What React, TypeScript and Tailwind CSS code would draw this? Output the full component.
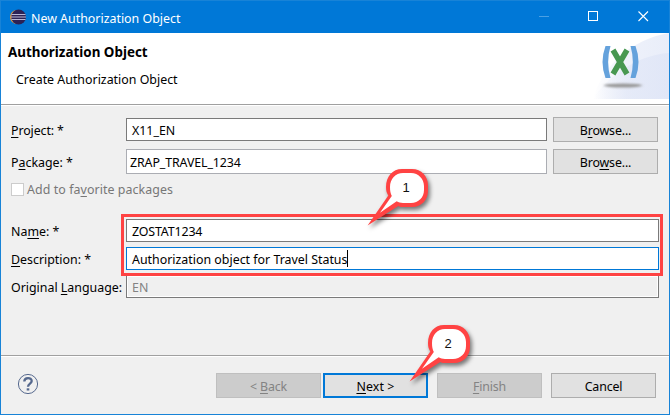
import type { ReactNode } from "react";

const U = ({ children }: { children: ReactNode }) => (
  <span className="underline decoration-1 underline-offset-2">{children}</span>
);

const T = ({ children, className = "" }: { children: ReactNode; className?: string }) => (
  <span className={`block whitespace-pre leading-[17px] ${className}`}>{children}</span>
);

const Label = ({ children, className = "" }: { children: ReactNode; className?: string }) => (
  <div className="w-[115px] shrink-0">
    <T className={`pt-[2px] ${className}`}>{children}</T>
  </div>
);

const Button = ({ children, className = "" }: { children: ReactNode; className?: string }) => (
  <button
    className={`flex h-[25px] w-[105px] shrink-0 items-center justify-center border pt-[2px] tracking-[-0.15px] ${className}`}
  >
    {children}
  </button>
);

function Callout({ n, className }: { n: number; className: string }) {
  return (
    <div className={`absolute h-[70px] w-[76px] ${className}`}>
      <svg width="76" height="70" viewBox="0 0 76 70" className="absolute overflow-visible">
        <path
          d="M35 2H45C54.5 2 61 9.5 61 18V24C61 33 54.5 40 45 40H35C33.5 40 32.5 39.6 31.3 38.9L0.6 58.4L21.3 28.5C19.6 26 19 23.5 19 20C19 9.5 25.5 2 35 2Z"
          fill="#ff4343"
          className="drop-shadow-[2px_3px_2px_rgba(0,0,0,0.5)]"
        />
        <path
          d="M36 6H44C51.5 6 57 12 57 19V23C57 30.500 51.5 36 44 36H36C33.500 36 31.500 35.400 29.7 34.3L13 45.7L24.8 29C23.500 26.500 23 24 23 20C23 12 28.5 6 36 6Z"
          fill="#fff"
        />
      </svg>
      <span className="absolute left-[19px] top-[13px] w-[40px] text-center font-['Liberation_Sans',sans-serif] text-[13px] leading-[16px] text-[#111]">
        {n}
      </span>
    </div>
  );
}

export default function App() {
  return (
    <div className="relative flex h-[415px] w-[670px] flex-col overflow-hidden border border-t-0 border-[#1883d7] bg-[#f0f0f0] font-['Noto_Sans','Open_Sans',sans-serif] text-[12.4px] text-black">
      <header className="flex h-[33px] shrink-0 items-center border-t border-[#1883d7] bg-[#0078d7] pl-[9px] text-white">
        <svg width="16" height="16" viewBox="0 0 16 16">
          <circle cx="7" cy="8" r="7" fill="#e89a3c" />
          <circle cx="8.6" cy="8" r="7.4" fill="#2c2255" />
          <path d="M1.5 5.5H15.5M1 8H16M1.5 10.5H15.5" stroke="#b9b7d6" strokeWidth="1.1" />
        </svg>
        <T className="ml-[5px] pt-[2px]">New Authorization Object</T>
        <svg width="110" height="12" viewBox="0 0 110 12" className="ml-auto mr-[20px]" fill="none">
          <path d="M0 5.5H10" stroke="#4aa0e4" />
          <rect x="49.5" y="0.5" width="9" height="9" stroke="#fff" />
          <path d="M99.5 0.5L109 10M109 0.5L99.5 10" stroke="#fff" strokeWidth="1.1" />
        </svg>
      </header>

      <section className="flex h-[71px] shrink-0 justify-between bg-white">
        <div className="flex flex-col pl-[7px] pt-[11px]">
          <T className="text-[13.4px]"><b>Authorization Object</b></T>
          <T className="ml-[8px] mt-[10px]">Create Authorization Object</T>
        </div>
        <svg width="78" height="66" viewBox="0 0 78 66">
          <defs>
            <linearGradient id="glow" x1="0" x2="1">
              <stop offset="0" stopColor="#dfe5f6" stopOpacity="0" />
              <stop offset="0.45" stopColor="#dfe5f6" stopOpacity="0.8" />
              <stop offset="1" stopColor="#dde4f6" />
            </linearGradient>
            <filter id="soft" x="-20%" y="-150%" width="140%" height="400%">
              <feGaussianBlur stdDeviation="1.8 0.9" />
            </filter>
          </defs>
          <path d="M78 0C40 6 10 35 2 66H78Z" fill="url(#glow)" opacity="0.65" />
          <path d="M78 20C45 22 15 45 2 66H78Z" fill="url(#glow)" opacity="0.7" />
          <ellipse cx="32" cy="52.5" rx="19" ry="2" fill="#999" filter="url(#soft)" />
          <path d="M14.500 13H19.500Q14.800 29 19.500 45H14.500Q8.500 29 14.500 13ZM39.500 13H44.500Q50.500 29 44.500 45H39.500Q44.200 29 39.500 13Z" fill="#65a2dc" />
          <path d="M22 17L36 41M36 17L22 41" stroke="#489851" strokeWidth="5.5" />
        </svg>
      </section>

      <main className="flex h-[251px] shrink-0 flex-col border-t border-[#a0a0a0]">
        <div className="h-px shrink-0 bg-white" />
        <div className="mt-[11px] flex h-[25px] shrink-0 items-center pl-[10px]">
          <Label className="tracking-[-0.1px]"><U>P</U>roject: *</Label>
          <div className="mr-[6px] flex h-[23px] w-[421px] items-center border border-[#7a7a7a] bg-white pl-[5px]">
            <T className="pt-[2px]">X11_EN</T>
          </div>
          <Button className="border-[#adadad] bg-[#e1e1e1]"><T>B<U>r</U>owse...</T></Button>
        </div>
        <div className="mt-[7px] flex h-[25px] shrink-0 items-center pl-[10px]">
          <Label>P<U>a</U>ckage: *</Label>
          <div className="mr-[6px] flex h-[25px] w-[421px] items-center border border-[#abadb3] bg-white pl-[3px]">
            <T className="pt-[2px] tracking-[-0.1px]">ZRAP_TRAVEL_1234</T>
          </div>
          <Button className="border-[#adadad] bg-[#e1e1e1]"><T>Bro<U>w</U>se...</T></Button>
        </div>
        <div className="mt-[7px] flex h-[17px] shrink-0 items-center pl-[10px] text-[#777]">
          <span className="mr-[3px] h-[13px] w-[13px] border border-[#ccc] bg-white" />
          <T className="tracking-[0.08px]">Add to fa<U>v</U>orite packages</T>
        </div>
        <div className="mt-[21px] flex shrink-0 flex-col gap-[5px] pl-[10px]">
          <div className="flex h-[23px] items-center">
            <Label>Na<U>m</U>e: *</Label>
            <div className="flex h-[23px] w-[533px] items-center border border-[#7a7a7a] bg-white pl-[5px]">
              <T className="pt-[2px] tracking-[-0.15px]">ZOSTAT1234</T>
            </div>
          </div>
          <div className="flex h-[23px] items-center">
            <Label><U>D</U>escription: *</Label>
            <div className="flex h-[23px] w-[533px] items-center border border-[#0078d7] bg-white pl-[5px]">
              <T className="pt-[2px]">Authorization object for Travel Status</T>
              <span className="h-[17px] w-px bg-black" />
            </div>
          </div>
          <div className="flex h-[23px] items-center">
            <Label>Original <U>L</U>anguage:</Label>
            <div className="h-[23px] w-[533px] border border-[#7a7a7a] bg-[#f0f0f0]">
              <div className="flex h-[21px] items-center border border-white pl-[4px] text-[#838383]">
                <T className="pt-[2px]">EN</T>
              </div>
            </div>
          </div>
        </div>
      </main>

      <footer className="flex h-[59px] shrink-0 flex-col border-t border-[#a0a0a0]">
        <div className="h-px shrink-0 bg-white" />
        <div className="flex h-[57px] items-center pb-[1px] pl-[16px]">
          <svg width="22" height="22" viewBox="0 0 22 22" fill="none" stroke="#56698e" className="-mt-[2px]">
            <circle cx="11" cy="11" r="9.6" strokeWidth="1" />
            <path d="M7.3 8.6C7.3 4 14.7 4 14.7 8C14.7 10.7 11 10.5 11 13.8" strokeWidth="2.3" />
            <path d="M11 15.3V17.5" strokeWidth="2.6" />
          </svg>
          <div className="ml-[177px] flex">
            <Button className="border-[#bfbfbf] bg-[#ccc] text-[#838383]"><T>&lt; <U>B</U>ack</T></Button>
            <Button className="ml-[2px] border-2 border-[#0078d7] bg-[#e1e1e1]"><T className="tracking-[0.1px]"><U>N</U>ext &gt;</T></Button>
            <Button className="ml-[9px] border-[#bfbfbf] bg-[#ccc] text-[#838383]"><T><U>F</U>inish</T></Button>
            <Button className="ml-[9px] border-[#adadad] bg-[#e1e1e1]"><T>Cancel</T></Button>
          </div>
        </div>
      </footer>

      <div className="absolute left-[120px] top-[214px] h-[62px] w-[542px] border-3 border-[#ff4343]" />
      <Callout n={1} className="left-[366px] top-[167px]" />
      <Callout n={2} className="left-[408px] top-[323px]" />
    </div>
  );
}
